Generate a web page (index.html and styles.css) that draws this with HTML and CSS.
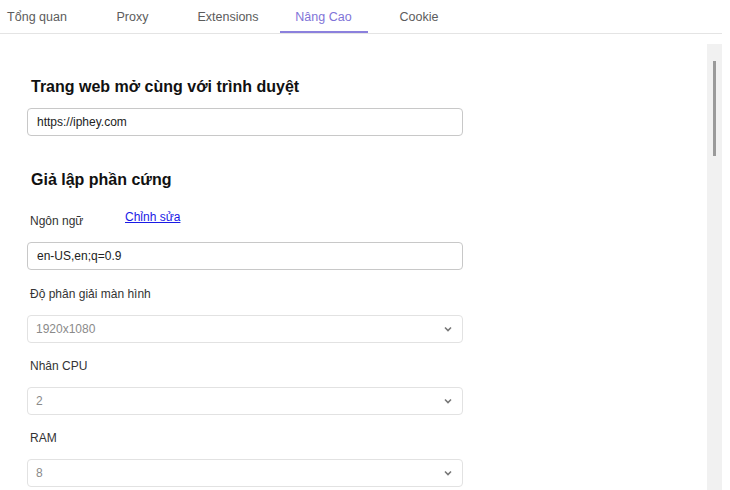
FILE: index.html
```html
<!DOCTYPE html>
<html lang="vi">
<head>
  <meta charset="UTF-8" />
  <title>Nâng Cao</title>
  <link rel="stylesheet" href="styles.css">
</head>
<body>

  <nav class="tabs">
    <a class="tab" href="#">Tổng quan</a>
    <a class="tab" href="#">Proxy</a>
    <a class="tab" href="#">Extensions</a>
    <a class="tab active" href="#">Nâng Cao</a>
    <a class="tab" href="#">Cookie</a>
  </nav>

  <div class="panel">
    <main class="content">
      <h3>Trang web mở cùng với trình duyệt</h3>
      <input type="text" class="field" value="https://iphey.com" />

      <h3 class="section">Giả lập phần cứng</h3>

      <div class="label-row">
        <label>Ngôn ngữ</label>
        <a class="edit" href="#">Chỉnh sửa</a>
      </div>
      <input type="text" class="field" value="en-US,en;q=0.9" />

      <label class="label">Độ phân giải màn hình</label>
      <div class="select">
        <span>1920x1080</span>
        <svg width="10" height="10" viewBox="0 0 10 10"><path d="M2 3.5 L5 6.5 L8 3.5" fill="none" stroke="#777" stroke-width="1.6"/></svg>
      </div>

      <label class="label">Nhân CPU</label>
      <div class="select">
        <span>2</span>
        <svg width="10" height="10" viewBox="0 0 10 10"><path d="M2 3.5 L5 6.5 L8 3.5" fill="none" stroke="#777" stroke-width="1.6"/></svg>
      </div>

      <label class="label">RAM</label>
      <div class="select">
        <span>8</span>
        <svg width="10" height="10" viewBox="0 0 10 10"><path d="M2 3.5 L5 6.5 L8 3.5" fill="none" stroke="#777" stroke-width="1.6"/></svg>
      </div>
    </main>

    <div class="scrollbar">
      <div class="thumb"></div>
    </div>
  </div>

</body>
</html>
```

FILE: styles.css
```css
* {
  margin: 0;
  padding: 0;
  box-sizing: border-box;
  font-family: 'Liberation Sans', Arial, sans-serif;
}

body {
  background: white;
  color: #333;
  font-size: 12px;
  overflow: hidden;
}

.tabs {
  display: flex;
  gap: 7.5px;
  width: 722px;
  height: 34px;
  border-bottom: 1px solid #e4e4e4;
}

.tab {
  flex: 0 0 88px;
  text-align: center;
  color: #5c5c5c;
  text-decoration: none;
  font-size: 12.5px;
  padding-top: 10px;
  border-bottom: 2px solid transparent;
}

.tab:first-child {
  margin-left: -7px;
}

.tab.active {
  color: #7f74d8;
  border-bottom-color: #8b80dd;
}

.panel {
  display: flex;
  margin-top: 10px;
  height: 446px;
}

.content {
  width: 707px;
  padding: 34px 0 0 27px;
}

h3 {
  font-size: 16px;
  font-weight: bold;
  color: #111;
  margin-left: 4px;
  margin-bottom: 12px;
}

h3.section {
  margin-top: 35px;
  margin-bottom: 19px;
}

.field {
  display: block;
  width: 436px;
  height: 28px;
  padding: 0 9px;
  border: 1px solid #c8c8c8;
  border-radius: 4px;
  font-size: 12px;
  color: #222;
  outline: none;
}

.label-row {
  display: flex;
  align-items: flex-start;
  margin-left: 3px;
  height: 34px;
}

.label-row label {
  padding-top: 6px;
  width: 95px;
}

.edit {
  color: #1a1ae6;
  text-decoration: underline;
  padding-top: 2px;
}

.label {
  display: block;
  margin: 16px 0 0 3px;
  height: 28px;
}

.field + .label {
  margin-top: 17px;
}

.select {
  display: flex;
  justify-content: space-between;
  align-items: center;
  width: 436px;
  height: 28px;
  padding: 0 9px 0 8px;
  border: 1px solid #e2e2e2;
  border-radius: 4px;
  color: #8a8a8a;
}

.scrollbar {
  width: 15px;
  background: #f1f1f1;
  position: relative;
}

.thumb {
  position: absolute;
  left: 6px;
  top: 17px;
  width: 3px;
  height: 95px;
  background: #9a9a9a;
}
```
